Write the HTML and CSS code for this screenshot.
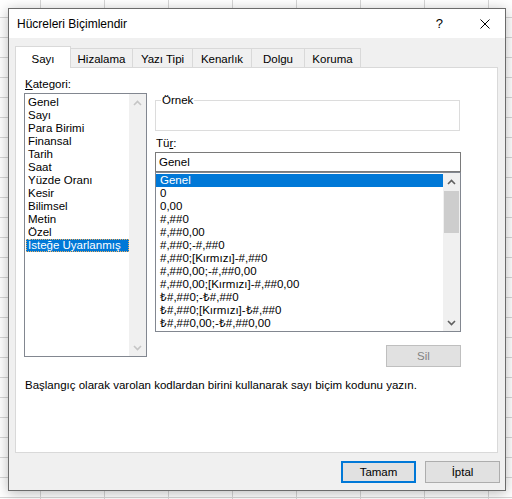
FILE: index.html
```html
<!DOCTYPE html>
<html lang="tr">
<head>
<meta charset="utf-8">
<title>Hücreleri Biçimlendir</title>
<link rel="stylesheet" href="styles.css">
</head>
<body>
<div class="dialog">
  <div class="titlebar">
    <span class="title">Hücreleri Biçimlendir</span>
    <span class="help">?</span>
    <svg class="close" width="10" height="10" viewBox="0 0 10 10"><path d="M0.5 0.5 L9.5 9.5 M9.5 0.5 L0.5 9.5" stroke="#000" stroke-width="1" fill="none"/></svg>
  </div>
  <div class="body">
    <div class="tabs">
      <div class="tab active w1">Sayı</div>
      <div class="tab w2">Hizalama</div>
      <div class="tab w3">Yazı Tipi</div>
      <div class="tab w4">Kenarlık</div>
      <div class="tab w5">Dolgu</div>
      <div class="tab w6">Koruma</div>
    </div>
    <div class="panel">
      <div class="cols">
        <div class="left">
          <div class="label"><u>K</u>ategori:</div>
          <div class="listbox cat">
            <ul class="items">
              <li>Genel</li>
              <li>Sayı</li>
              <li>Para Birimi</li>
              <li>Finansal</li>
              <li>Tarih</li>
              <li>Saat</li>
              <li>Yüzde Oranı</li>
              <li>Kesir</li>
              <li>Bilimsel</li>
              <li>Metin</li>
              <li>Özel</li>
              <li class="sel focus">İsteğe Uyarlanmış</li>
            </ul>
            <div class="vscroll off">
              <div class="sbtn"><svg width="9" height="6" viewBox="0 0 9 6"><path d="M1 5 L4.5 1.5 L8 5" stroke="#c5c5c5" stroke-width="1.6" fill="none"/></svg></div>
              <div class="sbtn"><svg width="9" height="6" viewBox="0 0 9 6"><path d="M1 1 L4.5 4.5 L8 1" stroke="#c5c5c5" stroke-width="1.6" fill="none"/></svg></div>
            </div>
          </div>
        </div>
        <div class="right">
          <fieldset class="sample"><legend>Örnek</legend></fieldset>
          <div class="label tur">Tü<u>r</u>:</div>
          <div class="input">Genel</div>
          <div class="listbox types">
            <ul class="items">
              <li class="sel">Genel</li>
              <li>0</li>
              <li>0,00</li>
              <li>#,##0</li>
              <li>#,##0,00</li>
              <li>#,##0;-#,##0</li>
              <li>#,##0;[Kırmızı]-#,##0</li>
              <li>#,##0,00;-#,##0,00</li>
              <li>#,##0,00;[Kırmızı]-#,##0,00</li>
              <li>₺#,##0;-₺#,##0</li>
              <li>₺#,##0;[Kırmızı]-₺#,##0</li>
              <li>₺#,##0,00;-₺#,##0,00</li>
            </ul>
            <div class="vscroll">
              <div class="sbtn"><svg width="9" height="6" viewBox="0 0 9 6"><path d="M1 5 L4.5 1.5 L8 5" stroke="#606060" stroke-width="1.6" fill="none"/></svg></div>
              <div class="thumb"></div>
              <div class="spacer"></div>
              <div class="sbtn"><svg width="9" height="6" viewBox="0 0 9 6"><path d="M1 1 L4.5 4.5 L8 1" stroke="#606060" stroke-width="1.6" fill="none"/></svg></div>
            </div>
          </div>
          <div class="silrow"><button class="btn sil" disabled>Sil</button></div>
        </div>
      </div>
      <p class="desc">Başlangıç olarak varolan kodlardan birini kullanarak sayı biçim kodunu yazın.</p>
    </div>
    <div class="footer">
      <button class="btn primary">Tamam</button>
      <button class="btn">İptal</button>
    </div>
  </div>
</div>
</body>
</html>
```
FILE: styles.css
```css
html, body {
  margin: 0;
  padding: 0;
}
body {
  width: 512px;
  height: 499px;
  overflow: hidden;
  background-color: #fff;
  background-image:
    linear-gradient(to right, #d6d6d6 1px, transparent 1px),
    linear-gradient(to bottom, #d6d6d6 1px, transparent 1px);
  background-size: 64px 20px;
  background-position: 40px 17px;
  font-family: "Liberation Sans", Arial, sans-serif;
  font-size: 12px;
  color: #000;
}
.dialog {
  position: relative;
  top: 8px;
  left: 8px;
  width: 498px;
  height: 483px;
  box-sizing: border-box;
  border: 1px solid #6b6b6b;
  background: #f0f0f0;
  box-shadow: 0 2px 12px rgba(0, 0, 0, 0.28);
  display: flex;
  flex-direction: column;
}
.titlebar {
  height: 29px;
  flex: none;
  background: #fff;
  display: flex;
  align-items: center;
  padding: 0 15px 0 8px;
}
.title {
  flex: 1;
}
.help {
  font-size: 13px;
  margin-right: 37px;
}
.close {
  display: block;
}
.body {
  flex: 1;
  padding: 8px 7px 0 6px;
  display: flex;
  flex-direction: column;
  font-size: 11.5px;
}
.tabs {
  display: flex;
  align-items: flex-end;
  height: 21px;
}
.tab {
  box-sizing: border-box;
  height: 19px;
  border: 1px solid #d9d9d9;
  border-bottom: 0;
  margin-left: -1px;
  padding-top: 3px;
  line-height: 14px;
  text-align: center;
  background: #f0f0f0;
}
.tab.active {
  height: 22px;
  margin-left: 0;
  margin-bottom: -1px;
  padding-top: 5px;
  background: #fff;
  position: relative;
  z-index: 1;
}
.w1 { width: 56px; }
.w2 { width: 63px; }
.w3 { width: 61px; }
.w4 { width: 60px; }
.w5 { width: 54px; }
.w6 { width: 57px; }
.panel {
  box-sizing: border-box;
  height: 386px;
  border: 1px solid #d9d9d9;
  background: #fff;
  padding: 9px 0 0 8px;
}
.cols {
  display: flex;
  gap: 8px;
  align-items: flex-start;
}
.left {
  width: 123px;
}
.label {
  height: 15px;
  line-height: 15px;
  padding-left: 1px;
}
.listbox {
  box-sizing: border-box;
  border: 1px solid #828790;
  background: #fff;
  display: flex;
  overflow: hidden;
}
.cat {
  margin-top: 1px;
  width: 123px;
  height: 264px;
}
.items {
  flex: 1;
  list-style: none;
  margin: 0;
  padding: 0;
  white-space: nowrap;
  overflow: hidden;
}
.items li {
  height: 13px;
  line-height: 13px;
}
.cat .items {
  padding: 2px 0 0 1px;
}
.cat .items li {
  padding-left: 2px;
}
.types .items {
  padding-top: 1px;
}
.types .items li {
  padding-left: 4px;
}
.items li.sel {
  background: #0078d7;
  color: #fff;
}
.items li.focus {
  outline: 1px dotted #f0b060;
  outline-offset: -1px;
}
.vscroll {
  width: 17px;
  flex: none;
  background: #f0f0f0;
  display: flex;
  flex-direction: column;
  justify-content: space-between;
}
.sbtn {
  height: 17px;
  display: flex;
  align-items: center;
  justify-content: center;
}
.sbtn svg {
  display: block;
}
.thumb {
  height: 42px;
  margin: 1px 1px 0;
  background: #cdcdcd;
}
.spacer {
  flex: 1;
}
.right {
  width: 306px;
  margin-top: 16px;
}
.sample {
  box-sizing: border-box;
  margin: 0;
  width: 305px;
  height: 38px;
  padding: 0 5px;
  border: 1px solid #dcdcdc;
}
.sample legend {
  padding: 0 1px;
  line-height: 14px;
}
.tur {
  margin-top: 5px;
}
.input {
  box-sizing: border-box;
  margin-top: 1px;
  width: 306px;
  height: 20px;
  border: 1px solid #7a7a7a;
  padding-left: 3px;
  line-height: 18px;
}
.types {
  width: 306px;
  height: 160px;
  border-color: #828790;
}
.silrow {
  display: flex;
  justify-content: flex-end;
  margin-top: 13px;
}
.btn {
  box-sizing: border-box;
  width: 75px;
  height: 22px;
  margin: 0;
  padding: 0;
  border: 1px solid #adadad;
  background: #e1e1e1;
  font-family: inherit;
  font-size: 11.5px;
  color: #000;
}
.btn.sil {
  border-color: #bfbfbf;
  background: #e1e1e1;
  color: #838383;
}
.btn.primary {
  border: 2px solid #0078d7;
}
.desc {
  margin: 11px 0 0 1px;
  line-height: 15px;
}
.footer {
  display: flex;
  justify-content: flex-end;
  gap: 9px;
  margin-right: -2px;
  padding-top: 8px;
}
```
